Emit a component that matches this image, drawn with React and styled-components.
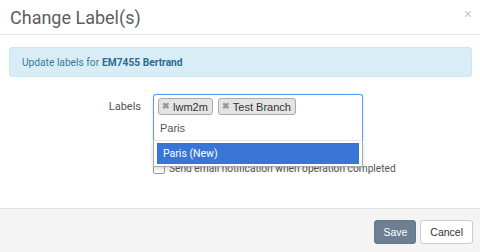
import React from "react";
import styled, { createGlobalStyle } from "styled-components";

const Global = createGlobalStyle`
  html, body {
    margin: 0;
    padding: 0;
    background: #fff;
  }
  body {
    font-family: Roboto, "Liberation Sans", sans-serif;
    width: 480px;
    height: 252px;
    overflow: hidden;
  }
`;

const Modal = styled.div`
  width: 480px;
  height: 252px;
  display: flex;
  flex-direction: column;
  background: #fff;
`;

const Header = styled.div`
  height: 34px;
  border-bottom: 1px solid #e5e5e5;
  display: flex;
  align-items: center;
  justify-content: space-between;
  padding: 0 8px 0 10px;
`;

const Title = styled.h4`
  margin: 0;
  font-size: 18px;
  font-weight: 400;
  color: #5e5e5e;
  line-height: 1;
  margin-top: 2px;
`;

const Close = styled.span`
  font-family: "Liberation Sans", sans-serif;
  font-size: 14px;
  color: #c8c8c8;
  margin-top: -7px;
`;

const Body = styled.div`
  flex: 1;
  padding: 12px 8px 0 9px;
`;

const Alert = styled.div`
  height: 30px;
  box-sizing: border-box;
  background: #d9edf7;
  border: 1px solid #c7e7f1;
  border-radius: 3px;
  color: #3b7aa0;
  font-size: 10.2px;
  display: flex;
  align-items: center;
  padding-left: 12px;

  b {
    font-weight: 700;
    color: #2f6a8f;
    margin-left: 3px;
  }
`;

const FormRow = styled.div`
  display: grid;
  grid-template-columns: 132px 210px;
  column-gap: 12px;
  margin-top: 17px;
`;

const Label = styled.label`
  font-size: 11px;
  color: #555;
  text-align: right;
  padding-top: 6px;
`;

const SelectWrap = styled.div`
  position: relative;
`;

const SelectBox = styled.div`
  box-sizing: border-box;
  height: 47px;
  border: 1px solid #5897fb;
  border-radius: 3px 3px 0 0;
  border-bottom-color: #e8e8e8;
  background: #fff;
  padding: 3px 4px;
  box-shadow: 0 0 3px rgba(0, 0, 0, 0.12);
`;

const Tags = styled.div`
  display: flex;
  gap: 5px;
`;

const Tag = styled.span`
  display: inline-flex;
  align-items: center;
  height: 17px;
  box-sizing: border-box;
  border: 1px solid #aaa;
  border-radius: 3px;
  background: #e4e4e4;
  font-family: "Liberation Sans", Arial, sans-serif;
  font-size: 11px;
  color: #333;
  padding: 0 4px 0 3px;
  gap: 3px;
`;

const TagX = styled.span`
  font-size: 9px;
  font-weight: 700;
  color: #999;
  line-height: 1;
`;

const Search = styled.div`
  font-family: "Liberation Sans", Arial, sans-serif;
  font-size: 11px;
  color: #555;
  margin: 7px 0 0 2px;
`;

const Dropdown = styled.div`
  position: absolute;
  left: 0;
  right: 0;
  top: 47px;
  box-sizing: border-box;
  background: #fff;
  border: 1px solid #aaa;
  border-top: none;
  box-shadow: 0 2px 4px rgba(0, 0, 0, 0.15);
  padding: 2px 3px 2px 3px;
  z-index: 2;
`;

const Option = styled.div`
  height: 21px;
  display: flex;
  align-items: center;
  padding-left: 6px;
  background: ${(p) => (p.active ? "#3875d7" : "#fff")};
  color: ${(p) => (p.active ? "#fff" : "#333")};
  font-size: 10.5px;
`;

const CheckRow = styled.div`
  display: flex;
  align-items: center;
  gap: 4px;
  margin: 21px 0 0 144px;
  font-size: 10.2px;
  color: #555;
`;

const Box = styled.span`
  width: 12px;
  height: 12px;
  box-sizing: border-box;
  border: 1px solid #999;
  border-radius: 2px;
  background: #fff;
  box-shadow: inset 0 1px 1px rgba(0, 0, 0, 0.1);
`;

const Footer = styled.div`
  height: 43px;
  border-top: 1px solid #e2e2e2;
  background: #f4f4f4;
  display: flex;
  align-items: center;
  justify-content: flex-end;
  gap: 4px;
  padding-right: 7px;
`;

const Button = styled.button`
  font-family: "Liberation Sans", Arial, sans-serif;
  font-size: 10.5px;
  height: 24px;
  box-sizing: border-box;
  border-radius: 3px;
  padding: 0 ${(p) => (p.primary ? "8px" : "9px")};
  border: 1px solid ${(p) => (p.primary ? "#65778a" : "#ccc")};
  background: ${(p) => (p.primary ? "#6d7f90" : "#fff")};
  color: ${(p) => (p.primary ? "#fff" : "#333")};
  margin-top: 3px;
`;

export default function App() {
  return (
    <>
      <Global />
      <Modal>
        <Header>
          <Title>Change Label(s)</Title>
          <Close>×</Close>
        </Header>
        <Body>
          <Alert>
            Update labels for <b>EM7455 Bertrand</b>
          </Alert>
          <FormRow>
            <Label>Labels</Label>
            <SelectWrap>
              <SelectBox>
                <Tags>
                  <Tag>
                    <TagX>✖</TagX>lwm2m
                  </Tag>
                  <Tag>
                    <TagX>✖</TagX>Test Branch
                  </Tag>
                </Tags>
                <Search>Paris</Search>
              </SelectBox>
              <Dropdown>
                <Option active>Paris (New)</Option>
              </Dropdown>
            </SelectWrap>
          </FormRow>
          <CheckRow>
            <Box />
            Send email notification when operation completed
          </CheckRow>
        </Body>
        <Footer>
          <Button primary>Save</Button>
          <Button>Cancel</Button>
        </Footer>
      </Modal>
    </>
  );
}
